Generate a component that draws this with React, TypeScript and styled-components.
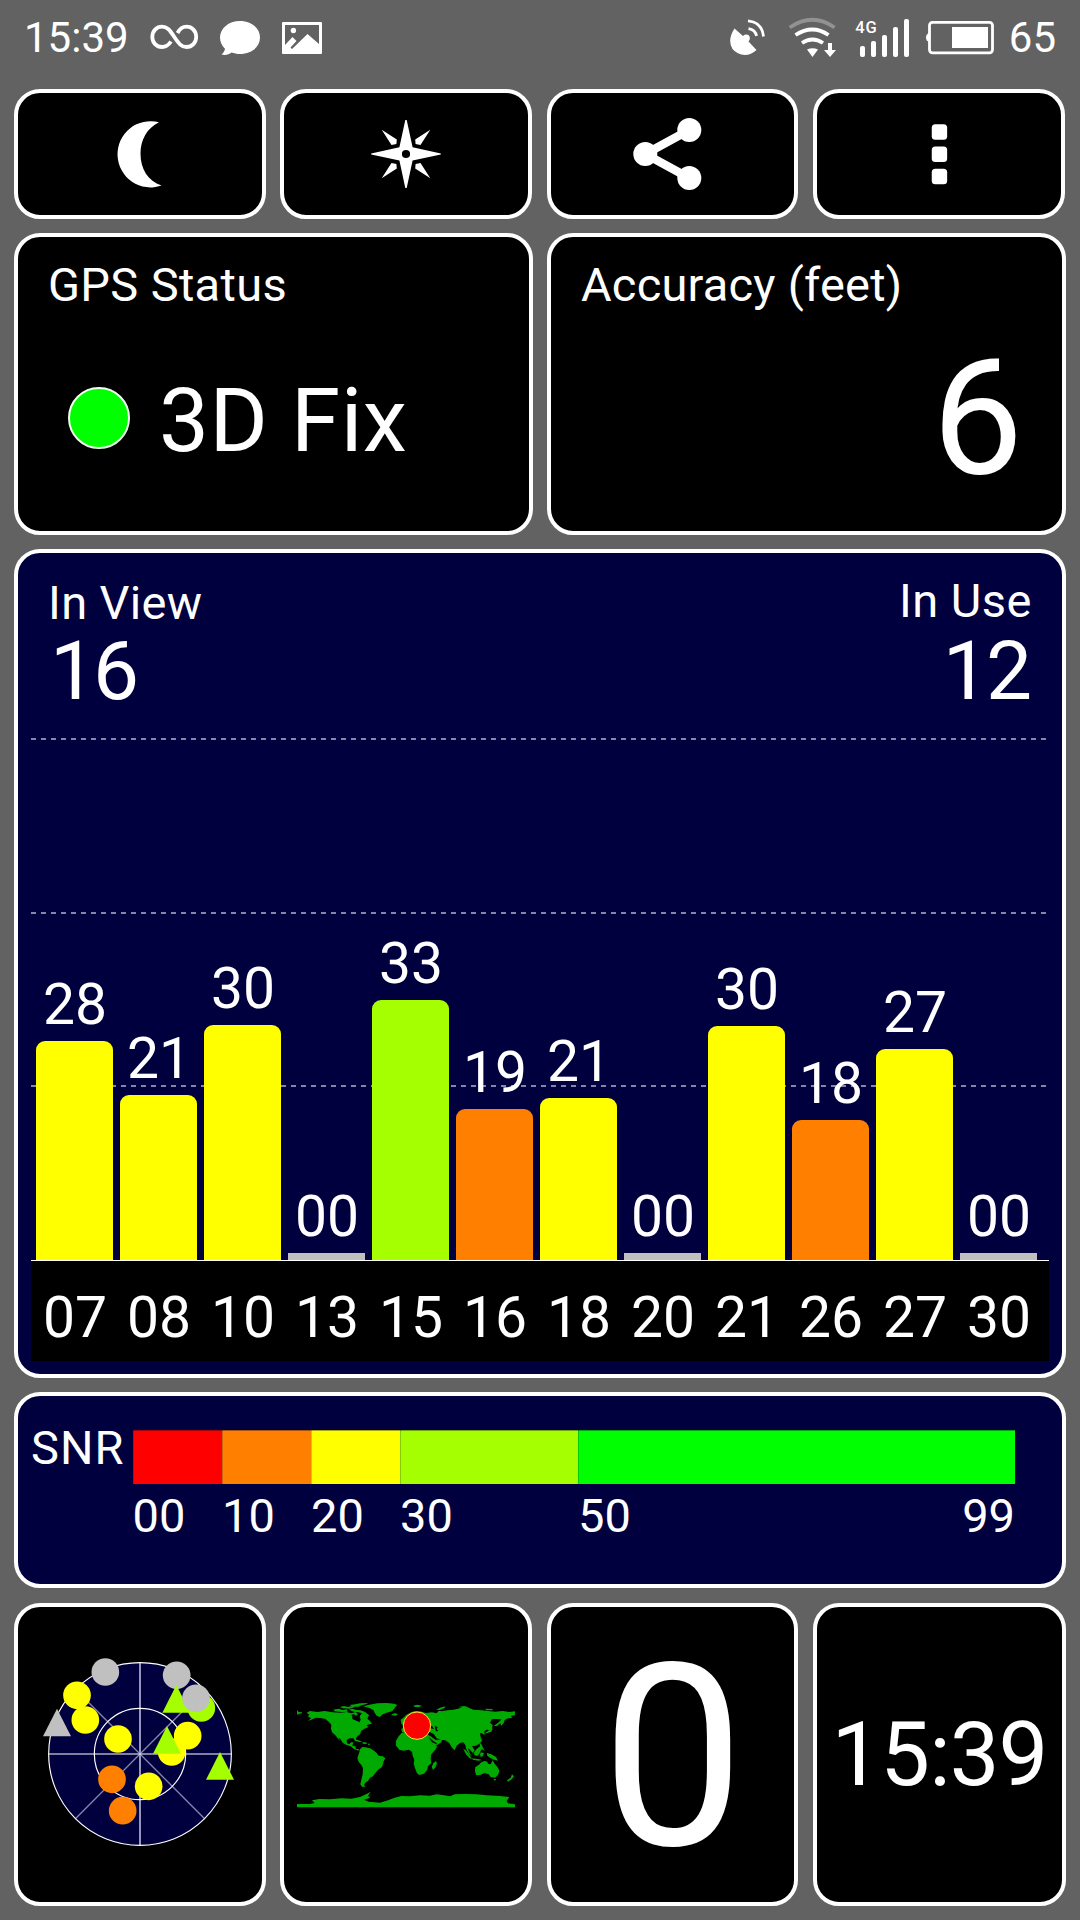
import React from "react";
import styled, { createGlobalStyle } from "styled-components";

const GREY = "#626262";
const NAVY = "#00003e";
const COLORS = {
  red: "#ff0000",
  orange: "#ff8000",
  yellow: "#ffff00",
  lime: "#a6ff00",
  green: "#00ff00",
  silver: "#c0c0c0",
};

const GlobalStyle = createGlobalStyle`
  * { box-sizing: border-box; }
  body { margin: 0; background: ${GREY}; }
`;

const Screen = styled.main`
  width: 1080px;
  height: 1920px;
  overflow: hidden;
  background: ${GREY};
  color: #fff;
  font-family: Roboto, "Noto Sans", sans-serif;
  font-weight: 400;
`;

const StatusBar = styled.header`
  display: flex;
  justify-content: space-between;
  height: 89px;
  padding: 17px 24px 0 24px;
`;

const StatusGroup = styled.div`
  display: flex;
  align-items: flex-start;
`;

const StatusText = styled.span<{ $ml?: number; $width?: number }>`
  font-size: 42px;
  line-height: 42px;
  width: ${(p) => (p.$width ? `${p.$width}px` : "auto")};
  margin-left: ${(p) => p.$ml ?? 0}px;
  white-space: nowrap;
`;

const StatusIcon = styled.svg<{ $ml: number }>`
  display: block;
  flex: none;
  margin-left: ${(p) => p.$ml}px;
`;

const Board = styled.div`
  display: flex;
  flex-direction: column;
  gap: 14px;
  width: 1052px;
  margin-left: 14px;
`;

const ButtonRow = styled.nav`
  display: grid;
  grid-template-columns: repeat(4, 251.7px);
  gap: 14.6px;
  height: 130px;
`;

const InfoRow = styled.div`
  display: grid;
  grid-template-columns: 1fr 1fr;
  gap: 14px;
  height: 302px;
`;

const TileRow = styled.div`
  display: grid;
  grid-template-columns: repeat(3, 251.7px) 1fr;
  gap: 14.6px;
  height: 303px;
  margin-top: 1px;
`;

const Panel = styled.section<{ $navy?: boolean }>`
  border: 4px solid #fff;
  border-radius: 26px;
  background: ${(p) => (p.$navy ? NAVY : "#000")};
  overflow: hidden;
`;

const Tile = styled(Panel)`
  display: flex;
  align-items: center;
  justify-content: center;
`;

const IconButton = styled.button`
  display: flex;
  align-items: center;
  justify-content: center;
  padding: 0;
  border: 4px solid #fff;
  border-radius: 26px;
  background: #000;
  color: #fff;
`;

const InfoPanel = styled(Panel)`
  padding: 20px 39px 0 30px;
`;

const Label = styled.div<{ $spacing?: number }>`
  font-size: 47px;
  line-height: 56px;
  letter-spacing: ${(p) => p.$spacing ?? 0}px;
  white-space: nowrap;
`;

const FixRow = styled.div`
  display: flex;
  align-items: center;
  height: 100px;
  margin: 58px 0 0 20px;
`;

const FixLamp = styled.span`
  width: 62px;
  height: 62px;
  margin-bottom: 7px;
  border: 2px solid #f0fff0;
  border-radius: 50%;
  background: ${COLORS.green};
`;

const FixText = styled.span`
  margin-left: 29px;
  font-size: 89px;
  line-height: 100px;
  letter-spacing: 0.5px;
`;

const AccuracyValue = styled.div`
  margin-top: 30px;
  font-size: 162px;
  line-height: 150px;
  text-align: right;
`;

const ChartPanel = styled(Panel)`
  display: flex;
  flex-direction: column;
  height: 829px;
  padding: 0 13px 13px 13px;
`;

const ChartHeader = styled.div`
  display: flex;
  justify-content: space-between;
  height: 160px;
  padding: 20px 17px 0;
`;

const Count = styled.div<{ $right?: boolean }>`
  text-align: ${(p) => (p.$right ? "right" : "left")};
  padding-top: ${(p) => (p.$right ? 0 : 2)}px;
`;

const CountValue = styled.div<{ $right?: boolean }>`
  margin: ${(p) => (p.$right ? "2px 3px 0 0" : "0 0 0 2px")};
  font-size: 82px;
  line-height: 80px;
  letter-spacing: -3px;
`;

const Plot = styled.div`
  position: relative;
  flex: 1;
  display: flex;
  align-items: flex-end;
  gap: 7px;
  padding-left: 5px;
`;

const GridLine = styled.i<{ $top: number }>`
  position: absolute;
  left: 0;
  right: 3px;
  top: ${(p) => p.$top}px;
  height: 2px;
  background: repeating-linear-gradient(90deg, #8686a8 0 5px, transparent 5px 10px);
`;

const BarColumn = styled.div`
  position: relative;
  width: 77px;
  text-align: center;
`;

const BarValue = styled.div`
  margin-bottom: 8px;
  padding-left: 1px;
  font-size: 57px;
  line-height: 57px;
`;

const Bar = styled.div<{ $height: number; $color: string }>`
  height: ${(p) => p.$height}px;
  border-radius: ${(p) => (p.$height > 10 ? "9px 9px 0 0" : "0")};
  background: ${(p) => p.$color};
`;

const Axis = styled.div`
  display: flex;
  gap: 7px;
  height: 101px;
  padding: 28px 0 0 5px;
  border-top: 1px solid #fff;
  background: #000;
`;

const AxisLabel = styled.span`
  width: 77px;
  padding-left: 1px;
  font-size: 57px;
  line-height: 57px;
  text-align: center;
`;

const SnrPanel = styled(Panel)`
  display: flex;
  height: 196px;
  padding: 24px 0 0 13px;
`;

const SnrTitle = styled(Label)`
  width: 101.5px;
`;

const SnrScale = styled.div`
  display: grid;
  grid-template-columns: 89.5px 89px 89px 178px 437px;
  grid-template-rows: 54px 56px;
  row-gap: 4px;
  margin-top: 10px;
`;

const SnrBand = styled.div<{ $color: string }>`
  background: ${(p) => p.$color};
  box-shadow: inset 1px 0 0 rgba(0, 0, 40, 0.2), inset 0 1px 0 rgba(0, 0, 40, 0.35);
`;

const SnrTicks = styled(Label)`
  display: flex;
  justify-content: space-between;
`;

const SpeedValue = styled.div`
  padding: 5px 0 0 1px;
  font-size: 255px;
  line-height: 257px;
`;

const ClockValue = styled.div`
  padding: 1px 0 0 0;
  font-size: 88.5px;
  line-height: 89px;
  letter-spacing: -0.9px;
`;

const Drawing = styled.svg`
  display: block;
  flex: none;
`;

const TileDrawing = styled(Drawing)`
  margin-bottom: 2px;
`;

const satellites = [
  { id: "07", snr: "28", height: 219, color: COLORS.yellow },
  { id: "08", snr: "21", height: 165, color: COLORS.yellow },
  { id: "10", snr: "30", height: 235, color: COLORS.yellow },
  { id: "13", snr: "00", height: 7, color: COLORS.silver },
  { id: "15", snr: "33", height: 260, color: COLORS.lime },
  { id: "16", snr: "19", height: 151, color: COLORS.orange },
  { id: "18", snr: "21", height: 162, color: COLORS.yellow },
  { id: "20", snr: "00", height: 7, color: COLORS.silver },
  { id: "21", snr: "30", height: 234, color: COLORS.yellow },
  { id: "26", snr: "18", height: 140, color: COLORS.orange },
  { id: "27", snr: "27", height: 211, color: COLORS.yellow },
  { id: "30", snr: "00", height: 7, color: COLORS.silver },
];

const bands = [
  { color: COLORS.red, ticks: ["00"] },
  { color: COLORS.orange, ticks: ["10"] },
  { color: COLORS.yellow, ticks: ["20"] },
  { color: COLORS.lime, ticks: ["30"] },
  { color: COLORS.green, ticks: ["50", "99"] },
];

type Marker = { shape: "dot" | "tri"; x: number; y: number; color: string };

const skyMarkers: Marker[] = [
  { shape: "dot", x: 256, y: 217, color: COLORS.silver },
  { shape: "dot", x: 470, y: 227, color: COLORS.silver },
  { shape: "dot", x: 171, y: 287, color: COLORS.yellow },
  { shape: "dot", x: 196, y: 361, color: COLORS.yellow },
  { shape: "dot", x: 544, y: 325, color: COLORS.lime },
  { shape: "tri", x: 469, y: 298, color: COLORS.lime },
  { shape: "dot", x: 528, y: 296, color: COLORS.silver },
  { shape: "dot", x: 503, y: 408, color: COLORS.yellow },
  { shape: "dot", x: 455, y: 457, color: COLORS.yellow },
  { shape: "tri", x: 441, y: 421, color: COLORS.lime },
  { shape: "dot", x: 294, y: 418, color: COLORS.yellow },
  { shape: "dot", x: 386, y: 560, color: COLORS.yellow },
  { shape: "dot", x: 276, y: 539, color: COLORS.orange },
  { shape: "dot", x: 308, y: 633, color: COLORS.orange },
  { shape: "tri", x: 111, y: 369, color: COLORS.silver },
  { shape: "tri", x: 600, y: 499, color: COLORS.lime },
];

const SkyView = () => (
  <TileDrawing width="200" height="200" viewBox="60 163 600 600">
    <circle cx="360" cy="463" r="274" fill={NAVY} />
    <path d="M166 269 554 657M554 269 166 657" stroke="#8686ae" strokeWidth="4" />
    <path d="M360 189V737" stroke="#9696bc" strokeWidth="6" />
    <path d="M86 463H634" stroke="#fff" strokeWidth="3" />
    <circle cx="360" cy="463" r="274" fill="none" stroke="#fff" strokeWidth="3.5" />
    <circle cx="360" cy="463" r="137" fill="none" stroke="#fff" strokeWidth="3.5" />
    {skyMarkers.map((m, i) =>
      m.shape === "dot" ? (
        <circle key={i} cx={m.x} cy={m.y} r="41.5" fill={m.color} />
      ) : (
        <path key={i} d={`M${m.x} ${m.y - 42}l42 83h-84z`} fill={m.color} />
      ),
    )}
  </TileDrawing>
);

const WorldMap = () => (
  <TileDrawing width="240" height="140" viewBox="18 13 720 420" fill="#00aa00">
    {/* North and Central America */}
    <path d="M80 99 90 94 112 97 134 94 158 98 180 99 200 97 214 101 226 97 234 103 228 109 216 113 218 119 230 123 238 128 242 120 239 110 248 97 258 100 266 108 262 117 270 124 276 132 268 134 259 137 266 142 252 148 243 154 241 162 232 170 228 175 229 186 224 182 220 176 208 176 200 181 201 190 207 194 214 188 220 188 217 198 226 200 228 208 238 209 235 213 222 208 212 200 198 195 188 189 180 176 176 174 180 184 172 174 166 167 156 158 153 147 154 135 146 126 136 118 122 115 108 114 92 121 84 124 93 116 84 110 88 105Z" />
    {/* Arctic islands */}
    <path d="M160 90 176 87 188 91 200 89 204 96 184 97 164 95ZM180 82 192 79 204 82 216 79 224 83 208 87 188 86ZM206 90 216 87 230 91 242 92 254 96 262 102 270 110 260 108 248 101 234 98 222 96ZM208 76 226 74 240 71 264 70 258 74 244 77 236 81 220 81Z" />
    {/* Greenland and Iceland */}
    <path d="M250 80 268 75 292 71 320 70 342 72 352 76 346 82 342 88 336 95 320 99 308 104 300 112 290 108 284 99 280 91 268 85ZM334 104 344 101 354 103 348 108 338 107Z" />
    {/* Caribbean */}
    <path d="M222 181 232 180 246 186 240 188 228 184ZM246 188 258 188 262 192 250 193ZM264 192h6v3h-6Z" />
    {/* South America */}
    <path d="M239 210 247 202 256 203 270 206 282 213 290 220 296 228 308 230 316 236 311 245 306 262 294 270 286 280 279 290 270 294 264 304 256 309 252 316 257 321 246 321 241 314 244 300 248 284 249 266 244 256 236 246 232 236 235 226 238 218Z" />
    {/* Africa */}
    <path d="M365 160 380 155 398 154 400 162 418 164 440 164 446 176 454 190 460 198 472 200 466 210 454 224 452 236 454 250 444 260 442 270 432 282 418 286 411 281 406 268 401 252 403 240 398 228 396 216 386 210 370 213 358 210 348 198 348 184 356 170ZM460 250 468 245 471 250 466 264 459 270 455 262Z" />
    {/* Eurasia */}
    <path d="M362 120 370 114 378 106 390 99 404 94 420 95 438 100 456 98 470 101 476 93 486 95 502 92 520 90 534 87 550 82 566 84 580 90 604 92 624 94 646 96 668 94 688 97 705 95 705 107 692 109 697 115 684 116 674 121 671 131 664 138 660 129 664 119 650 118 636 119 630 129 638 136 636 146 628 151 620 150 613 154 614 166 604 160 600 160 602 172 606 184 598 192 588 198 576 199 584 212 578 220 570 210 564 206 568 218 575 230 567 224 558 206 556 196 550 188 540 190 530 198 524 212 516 204 508 190 496 182 484 180 470 176 462 164 448 156 440 150 452 146 462 148 456 138 442 142 430 150 420 154 410 146 400 150 388 154 376 158 366 158 364 148 374 142 364 132ZM438 164 450 168 466 180 486 180 484 188 468 198 460 200 450 184Z" />
    <path d="M400 78 412 75 426 78 418 82 404 82ZM468 91 480 84 496 80 494 85 480 91ZM536 82 552 79 568 83 552 86ZM616 87 636 88 640 92 618 92ZM632 140 638 148 634 156 622 160 612 162 624 154 630 148ZM642 138 656 128 664 120 662 130 650 140Z" />
    {/* South-east Asia */}
    <path d="M550 208 558 212 572 232 578 237 569 236 558 224ZM582 218 590 208 600 200 606 206 598 222 592 229 583 226ZM576 236 594 238 606 241 596 243 578 240ZM602 218 612 220 608 230 602 232 600 224ZM598 188 604 194 610 206 614 214 605 208 600 198ZM620 220 634 224 648 232 654 243 642 240 630 234 622 228Z" />
    {/* Australia and New Zealand */}
    <path d="M586 262 596 256 604 248 614 244 622 246 624 252 632 254 638 242 644 252 654 264 658 274 654 286 645 294 632 292 626 284 614 280 600 286 588 286 585 274ZM640 298h8l-3 6ZM696 284 702 290 696 298 684 306 681 302 692 294Z" />
    {/* Antarctica */}
    <path d="M51 383V373L90 373 104 370 96 362 118 358 150 359 184 356 214 357 240 352 258 344 272 336 264 348 270 354 252 360 266 366 300 369 324 362 344 354 364 349 390 350 420 347 450 348 470 344 492 347 510 350 524 344 556 343 590 344 620 347 660 349 688 352 680 364 684 371 705 374V383Z" />
    <path d="M51 91 56 97 66 98 66 101 56 103 51 105ZM440 171 456 194 453 196 438 174Z" />
    <path d="M466 138 473 143 470 148 475 154 468 155 465 146ZM446 172 460 184 472 192 470 194 456 188Z" fill="#000" />
    <path d="M214 105 222 104 234 113 237 121 232 124 222 119Z" fill="#000" />
    <circle cx="411" cy="138" r="41" fill="#ff0000" stroke="#ffe040" strokeWidth="3" />
  </TileDrawing>
);

const MoonIcon = () => (
  <Drawing width="80" height="80" viewBox="99 114 80 80" fill="#fff">
    <path d="M158 122.3A33 33.1 0 1 0 160.5 185.5C147 181 139.5 169 139.5 153.5C139.5 140 146 128 158 122.3Z" />
  </Drawing>
);

const CompassIcon = () => (
  <Drawing width="80" height="80" viewBox="366 114 80 80" fill="#fff">
    <path
      fillRule="evenodd"
      d="M405.3 120h1.4L412.6 147.3 440.8 153.5v1L412.6 160.6 406.7 188h-1.4L399.4 160.6 371.2 154.5v-1L399.4 147.3ZM406 149.9a4.1 4.1 0 1 0 0 8.2a4.1 4.1 0 1 0 0-8.2Z"
    />
    <path d="M381.7 129.7 396.8 139.5 396.4 144 391.5 145ZM430.3 129.7 415.2 139.5 415.6 144 420.5 145ZM381.7 178.3 396.8 168.5 396.4 164 391.5 163ZM430.3 178.3 415.2 168.5 415.6 164 420.5 163Z" />
  </Drawing>
);

const ShareIcon = () => (
  <Drawing width="80" height="80" viewBox="632.5 114 80 80" fill="#fff">
    <path d="M689.8 130 645.8 154 689.8 178" fill="none" stroke="#fff" strokeWidth="8.5" />
    <circle cx="689.8" cy="130" r="12" />
    <circle cx="645.8" cy="154" r="12" />
    <circle cx="689.8" cy="178" r="12" />
  </Drawing>
);

const MoreIcon = () => (
  <Drawing width="80" height="80" viewBox="898.75 114 80 80" fill="#fff">
    <rect x="931.5" y="124.3" width="15.4" height="15.4" rx="3.5" />
    <rect x="931.5" y="146.6" width="15.4" height="15.4" rx="3.5" />
    <rect x="931.5" y="168.8" width="15.4" height="15.4" rx="3.5" />
  </Drawing>
);

const App = () => (
  <Screen>
    <GlobalStyle />
    <StatusBar>
      <StatusGroup>
        <StatusText $width={105}>15:39</StatusText>
        <StatusIcon $ml={20} width="51" height="40" viewBox="149 17 51 40" fill="none" stroke="#fff" strokeWidth="3.8">
          <path d="M171 41.5C168 46 165.5 47 162 47C156.5 47 152.3 42.5 152.3 37C152.3 31 156.5 26.7 162 26.7C167 26.7 169.5 29.5 174 36.5C179 44 181.5 47 186.5 47C192 47 196.2 42.5 196.2 37C196.2 31 192 26.7 186.5 26.7C182.5 26.7 180 28.5 177.5 33" />
        </StatusIcon>
        <StatusIcon $ml={18} width="44" height="40" viewBox="218 17 44 40" fill="#fff">
          <path d="M240 21C251.5 21 260 28.5 260 37.5C260 47 251.5 54 240 54C236.8 54 234 53.4 231.5 52.5C229 54.5 225.5 55.5 221.5 54.5C223.5 53 224.7 51 225 48.8C222 46 220 42 220 37.5C220 28.5 228.5 21 240 21Z" />
        </StatusIcon>
        <StatusIcon $ml={18} width="44" height="40" viewBox="280 17 44 40" fill="#fff">
          <path fillRule="evenodd" d="M283 22H321Q322 22 322 23V53Q322 54 321 54H283Q282 54 282 53V23Q282 22 283 22ZM285 25V45L292.5 37L296.5 41L290.5 47.5L292 49L307.5 34L319 44V25Z" />
          <circle cx="293.4" cy="30.5" r="2.7" />
        </StatusIcon>
      </StatusGroup>
      <StatusGroup>
        <StatusIcon $ml={0} width="40" height="40" viewBox="729 17 40 40" fill="#fff">
          <path d="M735.5 28.5 744 36Q747 33.5 750 35.5Q752 38.5 749.5 41.5L757.5 50Q752 55 746 55Q738 54.5 733.5 49Q728 40 735.5 28.5Z" />
          <path d="M749 20.8Q763 22 764.5 36.5M749.5 28.7Q756.5 30 757.5 36" fill="none" stroke="#fff" strokeWidth="2.8" />
        </StatusIcon>
        <StatusIcon $ml={19} width="52" height="42" viewBox="788 17 52 42" fill="none" stroke="#fff" strokeWidth="3.8">
          <path d="M790.7 27.5Q813.5 12 835.5 27.5" stroke="#929292" />
          <path d="M796.5 35Q813.5 24 829.5 35M803 43Q813.5 36 824 43" />
          <path d="M808 49.5Q813.5 47 819 49.5L813.5 57ZM829 43h4v7h4l-6 7-6-7h4Z" fill="#fff" stroke="none" />
        </StatusIcon>
        <StatusIcon $ml={15} width="57" height="42" viewBox="855 17 57 42" fill="#fff">
          <text x="856.3" y="33" fontFamily="Roboto, sans-serif" fontSize="16.5" fontWeight="500" textLength="21.5">
            4G
          </text>
          <rect x="861" y="46" width="5" height="11" rx="2" />
          <rect x="872" y="41" width="5" height="16" rx="2" />
          <rect x="883" y="35" width="5" height="22" rx="2" />
          <rect x="894" y="27" width="5" height="30" rx="2" />
          <rect x="905" y="19" width="5" height="38" rx="2" />
        </StatusIcon>
        <StatusIcon $ml={14} width="70" height="42" viewBox="926 17 70 42" fill="#fff">
          <rect x="930.5" y="22.3" width="63" height="30.5" rx="3" fill="none" stroke="#fff" strokeWidth="2.8" />
          <path d="M930 33v9q-3-1-3-4.5t3-4.5Z" />
          <rect x="953" y="27" width="36" height="21" />
        </StatusIcon>
        <StatusText $ml={13.5}>65</StatusText>
      </StatusGroup>
    </StatusBar>

    <Board>
      <ButtonRow>
        <IconButton><MoonIcon /></IconButton>
        <IconButton><CompassIcon /></IconButton>
        <IconButton><ShareIcon /></IconButton>
        <IconButton><MoreIcon /></IconButton>
      </ButtonRow>

      <InfoRow>
        <InfoPanel>
          <Label $spacing={0.35}>GPS Status</Label>
          <FixRow>
            <FixLamp />
            <FixText>3D Fix</FixText>
          </FixRow>
        </InfoPanel>
        <InfoPanel>
          <Label $spacing={0.2}>Accuracy (feet)</Label>
          <AccuracyValue>6</AccuracyValue>
        </InfoPanel>
      </InfoRow>

      <ChartPanel $navy>
        <ChartHeader>
          <Count>
            <Label $spacing={0.35}>In View</Label>
            <CountValue>16</CountValue>
          </Count>
          <Count $right>
            <Label $spacing={0.5}>In Use</Label>
            <CountValue $right>12</CountValue>
          </Count>
        </ChartHeader>
        <Plot>
          <GridLine $top={25} />
          <GridLine $top={199} />
          <GridLine $top={372} />
          {satellites.map((s) => (
            <BarColumn key={s.id}>
              <BarValue>{s.snr}</BarValue>
              <Bar $height={s.height} $color={s.color} />
            </BarColumn>
          ))}
        </Plot>
        <Axis>
          {satellites.map((s) => (
            <AxisLabel key={s.id}>{s.id}</AxisLabel>
          ))}
        </Axis>
      </ChartPanel>

      <SnrPanel $navy>
        <SnrTitle $spacing={1}>SNR</SnrTitle>
        <SnrScale>
          {bands.map((b) => (
            <SnrBand key={b.color} $color={b.color} />
          ))}
          {bands.map((b) => (
            <SnrTicks key={b.color}>
              {b.ticks.map((t) => (
                <span key={t}>{t}</span>
              ))}
            </SnrTicks>
          ))}
        </SnrScale>
      </SnrPanel>

      <TileRow>
        <Tile><SkyView /></Tile>
        <Tile><WorldMap /></Tile>
        <Tile><SpeedValue>0</SpeedValue></Tile>
        <Tile><ClockValue>15:39</ClockValue></Tile>
      </TileRow>
    </Board>
  </Screen>
);

export default App;
